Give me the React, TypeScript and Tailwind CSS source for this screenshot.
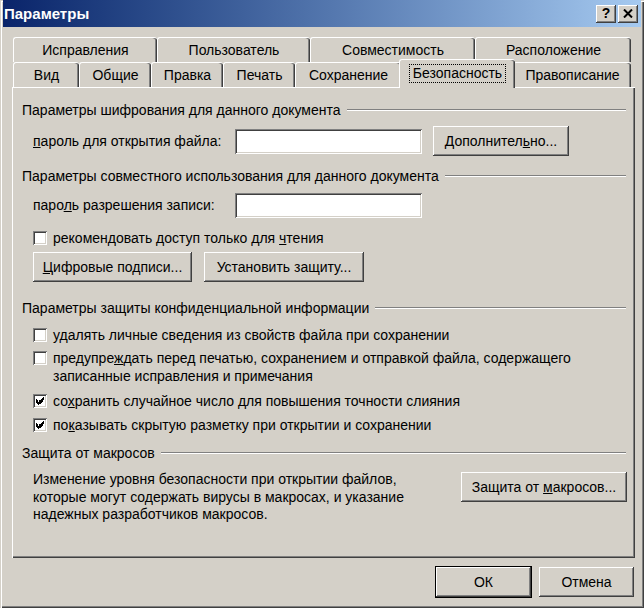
import React from "react";

const raised =
  "shadow-[inset_-1px_-1px_#404040,inset_1px_1px_#ffffff,inset_-2px_-2px_#808080]";
const sunken =
  "shadow-[inset_1px_1px_#808080,inset_-1px_-1px_#ffffff,inset_2px_2px_#404040,inset_-2px_-2px_#d4d0c8]";

function Btn({ w, children, def }: { w: string; children: React.ReactNode; def?: boolean }) {
  return (
    <div
      className={`${w} h-[30px] shrink-0 flex items-center justify-center bg-[#d4d0c8] ${raised} ${
        def ? "outline outline-1 outline-black" : ""
      }`}
    >
      <span className="whitespace-nowrap">{children}</span>
    </div>
  );
}

function Check({ checked }: { checked?: boolean }) {
  return (
    <span className={`w-[14px] h-[14px] shrink-0 bg-white flex items-center justify-center ${sunken}`}>
      {checked && (
        <svg width="8" height="8" viewBox="0 0 7 7" shapeRendering="crispEdges">
          <path d="M6 0h1v1h-1zM5 1h2v1h-2zM0 2h1v1h-1zM4 2h3v1h-3zM0 3h2v1h-2zM3 3h3v1h-3zM0 4h5v1h-5zM1 5h3v1h-3zM2 6h1v1h-1z" fill="#000" />
        </svg>
      )}
    </span>
  );
}

function Heading({ children }: { children: React.ReactNode }) {
  return (
    <div className="flex items-center h-[16px] leading-[16px]">
      <span className="whitespace-nowrap">{children}</span>
      <div className="flex-1 ml-[6px] h-[2px] border-t border-t-[#808080] border-b border-b-white" />
    </div>
  );
}

function Tab({ w, label }: { w: string; label: string }) {
  return (
    <div
      className={`${w} h-[25px] shrink-0 flex items-center justify-center rounded-t-[3px] border-t border-l border-white shadow-[inset_-1px_0_#404040,inset_-2px_0_#808080] leading-[16px]`}
    >
      <span className="whitespace-nowrap">{label}</span>
    </div>
  );
}

export default function App() {
  return (
    <div className="w-[644px] h-[608px] bg-[#d4d0c8] px-[3px] flex flex-col text-black text-[14px] font-['Liberation_Sans',Arial,sans-serif] shadow-[inset_1px_1px_#d4d0c8,inset_2px_2px_#ffffff,inset_-1px_-1px_#404040,inset_-2px_-2px_#808080] overflow-hidden">
      {/* Title bar */}
      <div className="h-[27px] shrink-0 flex items-center bg-gradient-to-r from-[#0a246a] to-[#a6caf0] pl-[1px] pr-[3px]">
        <span className="text-white font-bold text-[15px] leading-[18px]">Параметры</span>
        <div className="ml-auto flex gap-[2px]">
          <div className={`w-[20px] h-[18px] bg-[#d4d0c8] flex items-center justify-center ${raised}`}>
            <span className="font-bold text-[14px] leading-[14px] -mt-[1px]">?</span>
          </div>
          <div className={`w-[20px] h-[18px] bg-[#d4d0c8] flex items-center justify-center ${raised}`}>
            <svg width="10" height="9" viewBox="0 0 10 9">
              <path d="M1 0.5 L9 8.5 M9 0.5 L1 8.5" stroke="#000" strokeWidth="2" />
            </svg>
          </div>
        </div>
      </div>

      {/* Body */}
      <div className="pl-[9px] pr-[6px] flex flex-col">
        {/* Tabs */}
        <div className="mt-[10px] flex flex-col pl-[1px]">
          <div className="flex">
            <Tab w="w-[144px]" label="Исправления" />
            <Tab w="w-[153px]" label="Пользователь" />
            <Tab w="w-[165px]" label="Совместимость" />
            <Tab w="w-[156px]" label="Расположение" />
          </div>
          <div className="flex h-[25px]">
            <Tab w="w-[66px]" label="Вид" />
            <Tab w="w-[72px]" label="Общие" />
            <Tab w="w-[72px]" label="Правка" />
            <Tab w="w-[72px]" label="Печать" />
            <Tab w="w-[106px]" label="Сохранение" />
            <div className="relative z-10 w-[116px] h-[29px] -mt-[3px] -mx-[2px] shrink-0 flex items-center justify-center rounded-t-[3px] border-t border-l border-white bg-[#d4d0c8] shadow-[inset_-1px_0_#404040,inset_-2px_0_#808080]">
              <span className="whitespace-nowrap leading-[17px] px-[3px] outline outline-1 outline-dotted outline-black -mt-[2px]">
                Безопасность
              </span>
            </div>
            <Tab w="w-[118px]" label="Правописание" />
          </div>
        </div>

        {/* Panel */}
        <div className="h-[471px] shrink-0 pl-[10px] pr-[9px] shadow-[inset_1px_1px_#ffffff,inset_-1px_-1px_#404040,inset_-2px_-2px_#808080] flex flex-col">
          <div className="mt-[15px]">
            <Heading>Параметры шифрования для данного документа</Heading>
          </div>
          <div className="mt-[8px] h-[30px] flex items-center pl-[11px]">
            <span className="w-[202px] whitespace-nowrap">
              <u>п</u>ароль для открытия файла:
            </span>
            <div className={`w-[187px] h-[25px] bg-white ${sunken}`} />
            <div className="ml-[11px]">
              <Btn w="w-[136px]">
                Дополнител<u>ь</u>но...
              </Btn>
            </div>
          </div>

          <div className="mt-[12px]">
            <Heading>Параметры совместного использования для данного документа</Heading>
          </div>
          <div className="mt-[9px] h-[25px] flex items-center pl-[11px]">
            <span className="w-[202px] whitespace-nowrap">
              паро<u>л</u>ь разрешения записи:
            </span>
            <div className={`w-[187px] h-[25px] bg-white ${sunken}`} />
          </div>
          <div className="mt-[12px] h-[16px] flex items-center pl-[11px] gap-[6px]">
            <Check />
            <span className="whitespace-nowrap">
              рекомендовать доступ только для <u>ч</u>тения
            </span>
          </div>
          <div className="mt-[6px] flex pl-[11px] gap-[12px]">
            <Btn w="w-[159px]">
              <u>Ц</u>ифровые подписи...
            </Btn>
            <Btn w="w-[160px]">Установить защиту...</Btn>
          </div>

          <div className="mt-[18px]">
            <Heading>Параметры защиты конфиденциальной информации</Heading>
          </div>
          <div className="mt-[11px] h-[16px] flex items-center pl-[11px] gap-[6px]">
            <Check />
            <span className="whitespace-nowrap">
              у<u>д</u>алять личные сведения из свойств файла при сохранении
            </span>
          </div>
          <div className="mt-[6px] flex items-start pl-[11px] gap-[6px]">
            <div className="mt-[2px]">
              <Check />
            </div>
            <span className="whitespace-nowrap leading-[18px]">
              предупре<u>ж</u>дать перед печатью, сохранением и отправкой файла, содержащего
              <br />
              записанные исправления и примечания
            </span>
          </div>
          <div className="mt-[8px] h-[16px] flex items-center pl-[11px] gap-[6px]">
            <Check checked />
            <span className="whitespace-nowrap">
              со<u>х</u>ранить случайное число для повышения точности слияния
            </span>
          </div>
          <div className="mt-[8px] h-[16px] flex items-center pl-[11px] gap-[6px]">
            <Check checked />
            <span className="whitespace-nowrap">
              по<u>к</u>азывать скрытую разметку при открытии и сохранении
            </span>
          </div>

          <div className="mt-[12px]">
            <Heading>Защита от макросов</Heading>
          </div>
          <div className="mt-[10px] flex items-start pl-[11px]">
            <p className="leading-[17.5px] whitespace-nowrap">
              Изменение уровня безопасности при открытии файлов,
              <br />
              которые могут содержать вирусы в макросах, и указание
              <br />
              надежных разработчиков макросов.
            </p>
            <div className="ml-auto mt-[1px] -mr-[1px]">
              <Btn w="w-[166px]">
                Защита от <u>м</u>акросов...
              </Btn>
            </div>
          </div>
        </div>

        {/* Footer buttons */}
        <div className="mt-[9px] flex justify-end gap-[8px] pr-[1px]">
          <Btn w="w-[95px]" def>
            ОК
          </Btn>
          <Btn w="w-[95px]">Отмена</Btn>
        </div>
      </div>
    </div>
  );
}
